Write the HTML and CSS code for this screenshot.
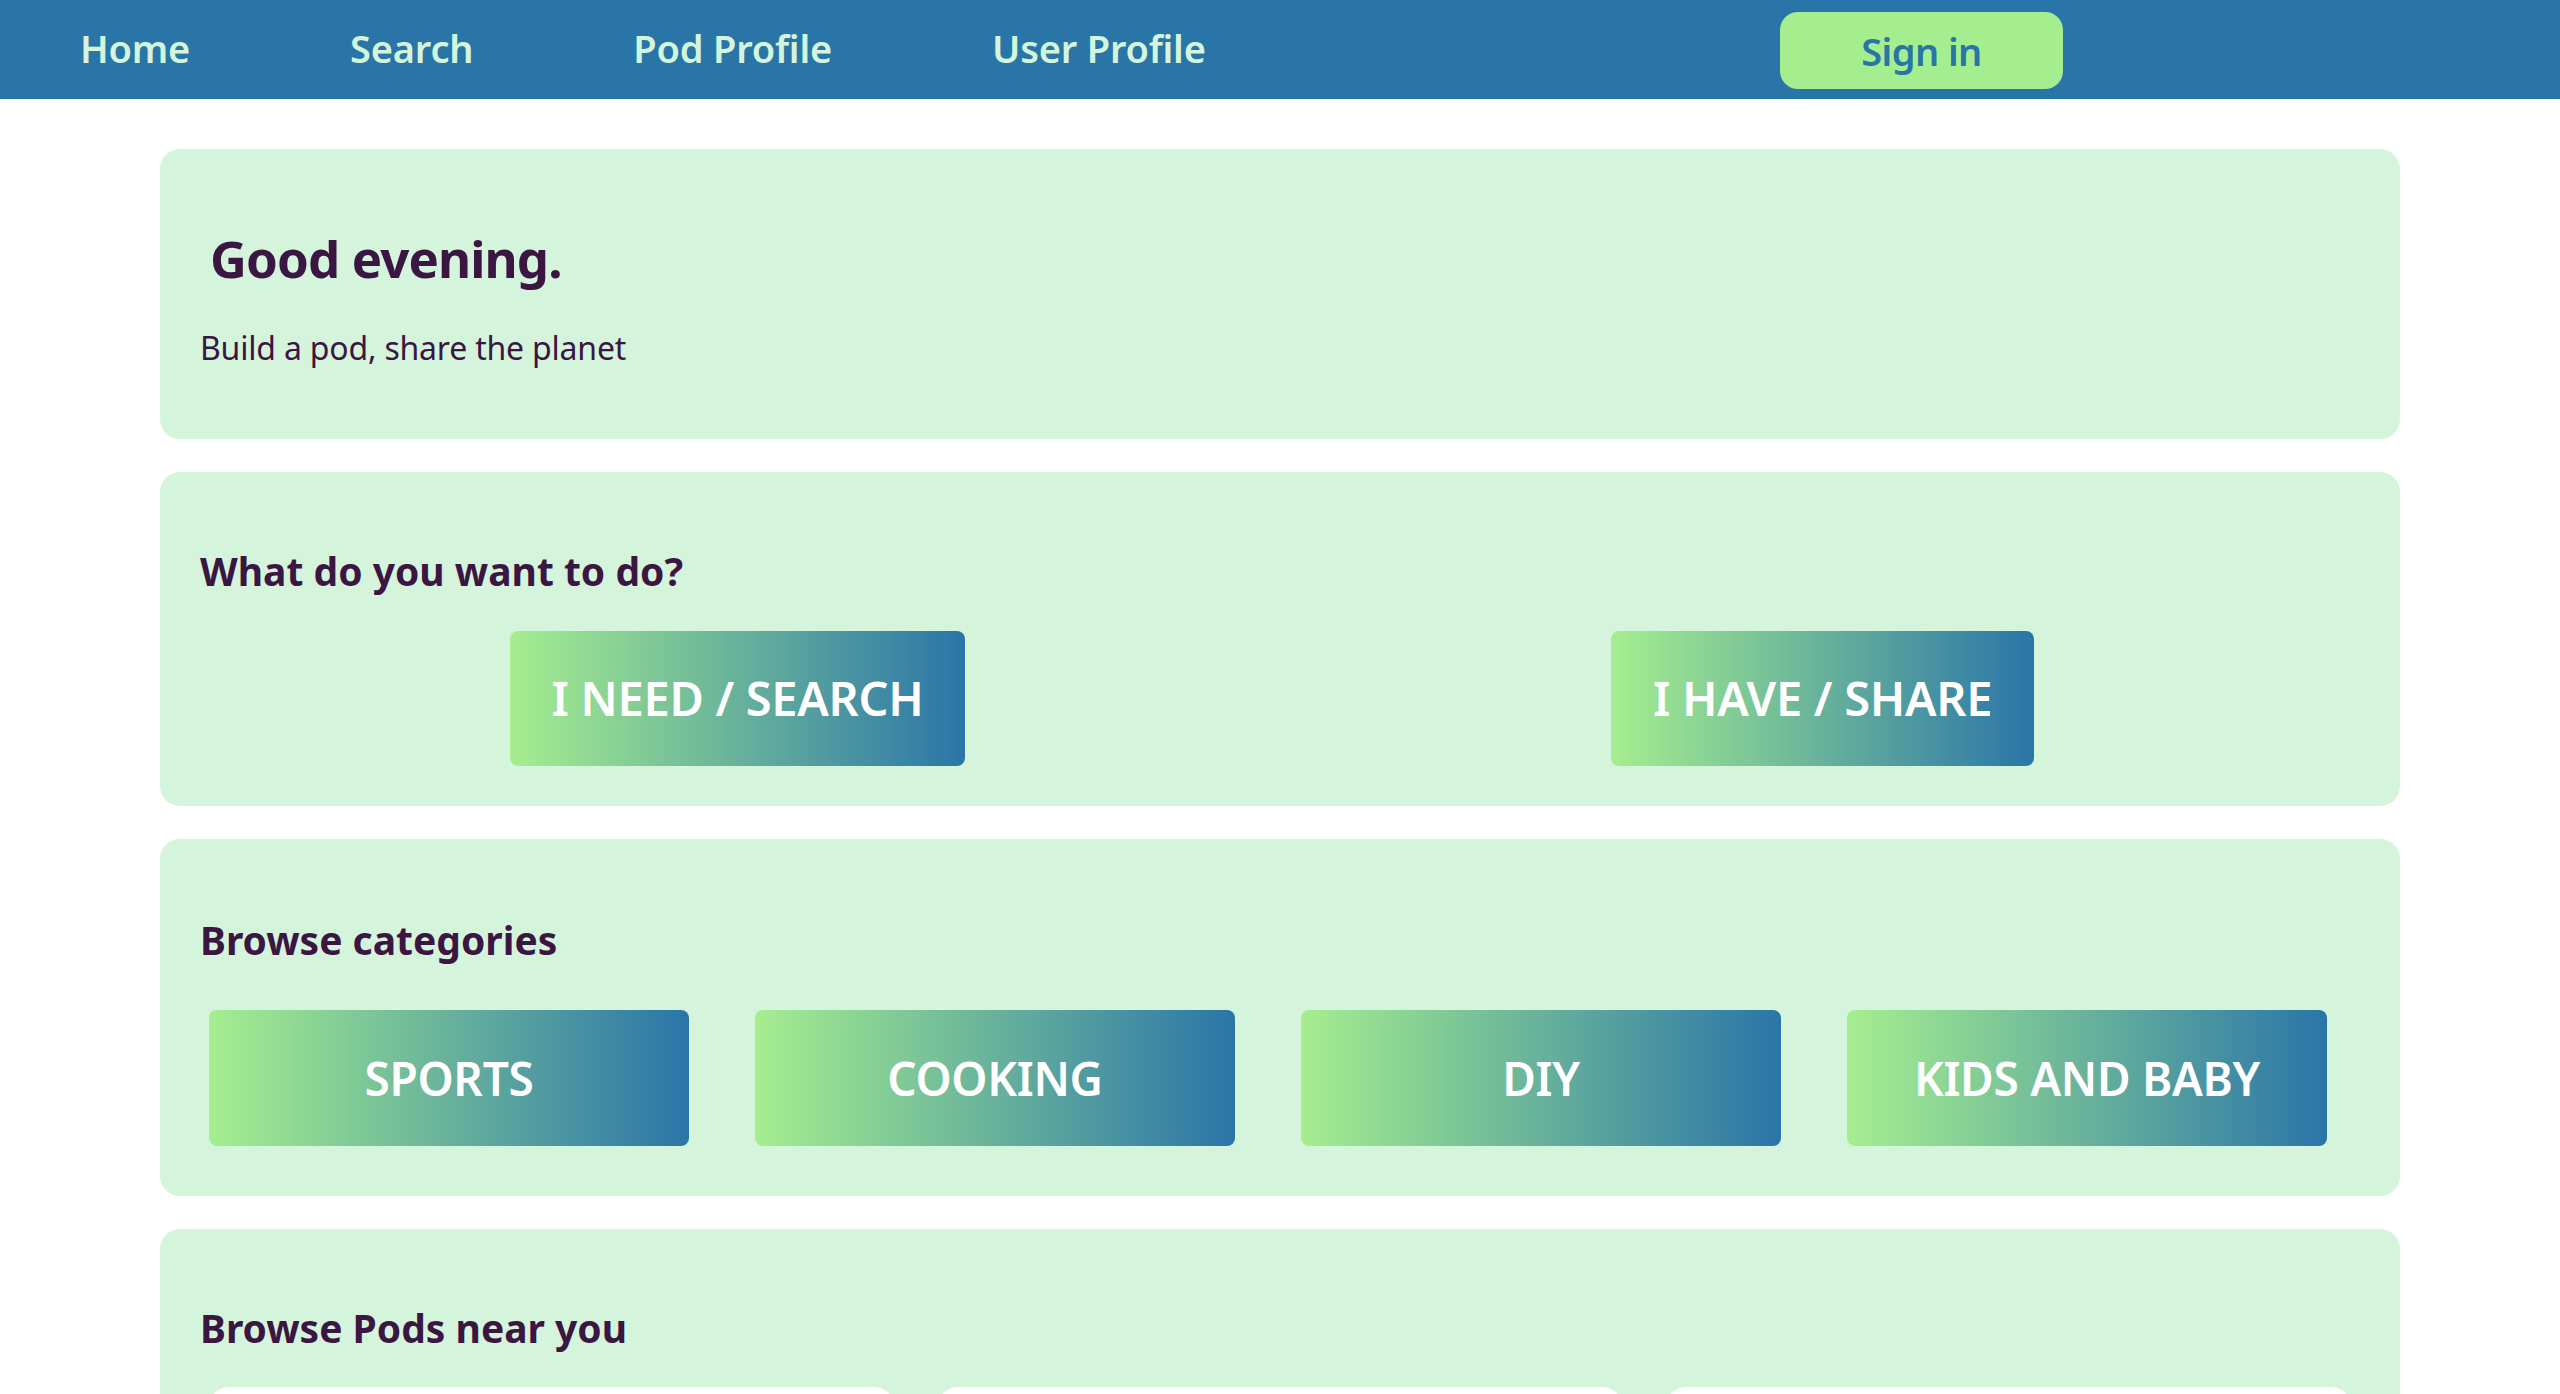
FILE: index.html
```html
<!DOCTYPE html>
<html lang="en">
<head>
<meta charset="utf-8">
<title>Pods</title>
<link rel="stylesheet" href="styles.css">
</head>
<body>
<nav class="topnav">
  <a class="navlink" href="#">Home</a>
  <a class="navlink" href="#">Search</a>
  <a class="navlink" href="#">Pod Profile</a>
  <a class="navlink" href="#">User Profile</a>
  <a class="signin" href="#">Sign in</a>
</nav>
<main class="page">
  <section class="card hero">
    <h1 class="greeting">Good evening.</h1>
    <p class="tagline">Build a pod, share the planet</p>
  </section>
  <section class="card">
    <h2 class="card-title">What do you want to do?</h2>
    <div class="actions">
      <a class="grad-btn action-btn" href="#">I NEED / SEARCH</a>
      <a class="grad-btn action-btn" href="#">I HAVE / SHARE</a>
    </div>
  </section>
  <section class="card cats-card">
    <h2 class="card-title">Browse categories</h2>
    <div class="cats">
      <a class="grad-btn cat-btn" href="#">SPORTS</a>
      <a class="grad-btn cat-btn" href="#">COOKING</a>
      <a class="grad-btn cat-btn" href="#">DIY</a>
      <a class="grad-btn cat-btn" href="#">KIDS AND BABY</a>
    </div>
  </section>
  <section class="card">
    <h2 class="card-title">Browse Pods near you</h2>
    <div class="pods">
      <div class="pod"></div>
      <div class="pod"></div>
      <div class="pod"></div>
    </div>
  </section>
</main>
</body>
</html>
```
FILE: styles.css
```css
* { box-sizing: border-box; }

html, body {
  margin: 0;
  padding: 0;
  background: #ffffff;
  font-family: "Noto Sans", "Open Sans", sans-serif;
  color: #3c1642;
}

a { text-decoration: none; }

.topnav {
  height: 99px;
  background: #2a75a8;
  display: flex;
  align-items: center;
  padding: 0 497px 0 80px;
  gap: 160px;
}

.navlink {
  color: #d4f5dc;
  font-size: 38px;
  font-weight: 600;
  letter-spacing: -0.2px;
  line-height: 1;
  padding-bottom: 4px;
}

.signin {
  margin-left: auto;
  width: 283px;
  height: 77px;
  margin-top: 2px;
  background: #a5ee8f;
  color: #2a75a8;
  border-radius: 18px;
  display: flex;
  align-items: center;
  justify-content: center;
  font-size: 38px;
  font-weight: 600;
  letter-spacing: -0.6px;
}

.page {
  width: 2240px;
  margin: 50px auto 0;
  display: flex;
  flex-direction: column;
  gap: 33px;
}

.card {
  background: #d4f5dc;
  border-radius: 20px;
  padding: 72px 40px 40px 40px;
}

.hero {
  padding-top: 75px;
  padding-bottom: 69px;
}

.greeting {
  margin: 0 0 33px 10px;
  font-size: 51px;
  font-weight: 700;
  letter-spacing: -0.9px;
  line-height: 1.36;
}

.tagline {
  margin: 0;
  font-size: 32px;
  font-weight: 400;
  letter-spacing: -0.2px;
  line-height: 1.36;
}

.card-title {
  margin: 0;
  font-size: 39px;
  font-weight: 700;
  letter-spacing: 0;
  line-height: 1.36;
}

.actions {
  margin-top: 34px;
  display: grid;
  grid-template-columns: 1fr 1fr;
  column-gap: 10px;
  justify-items: center;
}

.grad-btn {
  background: linear-gradient(to right, #a5ee8f, #2a75a8);
  color: #ffffff;
  border-radius: 8px;
  display: flex;
  align-items: center;
  justify-content: center;
  font-weight: 600;
}

.action-btn {
  height: 135px;
  padding: 0 42px;
  font-size: 47px;
  letter-spacing: -0.3px;
}

.cats-card {
  padding-top: 74px;
  padding-bottom: 50px;
}

.cats {
  margin: 44px 0 0 -24px;
  display: grid;
  grid-template-columns: repeat(4, 1fr);
  justify-items: center;
}

.cat-btn {
  width: 480px;
  height: 136px;
  font-size: 46px;
  letter-spacing: -0.3px;
}

.pods {
  margin: 33px 9px 0 9px;
  display: grid;
  grid-template-columns: repeat(3, 1fr);
  gap: 44px;
}

.pod {
  height: 420px;
  background: #ffffff;
  border-radius: 20px;
}
```
